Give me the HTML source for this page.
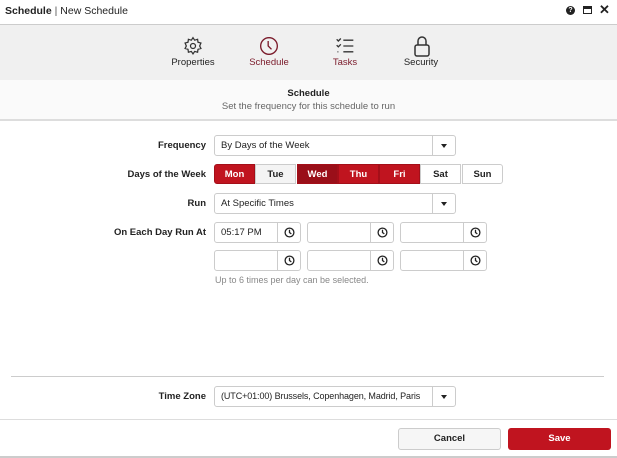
<!DOCTYPE html><html><head><style>
body{margin:0;width:617px;height:458px;overflow:hidden;background:#fff;font-family:"Liberation Sans",sans-serif;font-size:10px;color:#222;position:relative}
.a{position:absolute}
.lbl{position:absolute;font-weight:bold;font-size:9.5px;text-align:right;width:200px;left:6px}
.box{position:absolute;border:1px solid #ccc;border-radius:3px;background:#fff;box-sizing:border-box}
.sel .t{position:absolute;left:6px;top:4px;font-size:9.5px;white-space:nowrap}
.sel .dd{position:absolute;right:0;top:0;bottom:0;width:22px;border-left:1px solid #ccc}
.sel .dd:after{content:"";position:absolute;left:8px;top:8px;border:3.5px solid transparent;border-top:4px solid #222}
.day{position:absolute;top:164px;height:20px;width:41px;box-sizing:border-box;text-align:center;line-height:20px;font-weight:bold;font-size:9.5px}
.on{background:#c0141f;color:#fff;border:1px solid #a40f19}
.off{background:#fff;border:1px solid #ccc;color:#222}
.tm .ck{position:absolute;right:0;top:0;bottom:0;width:22px;border-left:1px solid #ccc}
.tm svg{position:absolute;left:6px;top:4px}
.nav{position:absolute;top:36px;text-align:center;width:60px;font-size:9.5px}
</style></head><body>
<div class="a" style="left:5px;top:5px;font-size:10.5px;font-weight:bold">Schedule <span style="font-weight:normal;color:#555">|</span> <span style="font-weight:normal">New Schedule</span></div>
<div class="a" style="left:566px;top:6px;width:9px;height:9px;border-radius:50%;background:#222;color:#fff;font-size:7px;text-align:center;line-height:9px;font-weight:bold">?</div>
<div class="a" style="left:583px;top:6px;width:9px;height:8px;border:1px solid #222;border-top-width:3px;box-sizing:border-box"></div>
<div class="a" style="left:599px;top:2px;font-size:13px;font-weight:bold">✕</div>
<div class="a" style="left:0;top:24px;width:617px;height:55px;background:#f0f0f0;border-top:1px solid #ccc;border-bottom:1px solid #ccc"></div>
<svg class="a" style="left:183px;top:36px" width="20" height="20" viewBox="0 0 24 24" fill="none" stroke="#333" stroke-width="1.5"><circle cx="12" cy="12" r="3"/><path d="M12 2l2 3 3.5-1 .5 3.5 3.5 1-1.5 3.5 1.5 3-3.5 1-.5 3.5-3.5-1-2 3-2-3-3.5 1-.5-3.5-3.5-1 1.5-3-1.5-3.5 3.5-1 .5-3.5 3.5 1z"/></svg>
<svg class="a" style="left:259px;top:36px" width="20" height="20" viewBox="0 0 24 24" fill="none" stroke="#7a1a2a" stroke-width="1.6"><circle cx="12" cy="12" r="10"/><path d="M11 6v6l4 4"/></svg>
<svg class="a" style="left:335px;top:36px" width="20" height="20" viewBox="0 0 24 24" fill="none" stroke="#333" stroke-width="1.6"><path d="M2 4l2 2 3-3M2 11l2 2 3-3M3 19h1M10 5h12M10 12h12M10 19h12"/></svg>
<svg class="a" style="left:412px;top:35px" width="20" height="22" viewBox="0 0 20 22" fill="none" stroke="#333" stroke-width="1.5"><rect x="3" y="10" width="14" height="11" rx="2"/><path d="M6 10V6a4 4 0 0 1 8 0v4"/></svg>
<div class="nav" style="left:163px;top:57px">Properties</div>
<div class="nav" style="left:239px;top:57px;color:#7a1a2a">Schedule</div>
<div class="nav" style="left:315px;top:57px;color:#7a1a2a">Tasks</div>
<div class="nav" style="left:391px;top:57px">Security</div>
<div class="a" style="left:0;top:80px;width:617px;height:39px;background:#fafafa;border-bottom:2px solid #ddd"></div>
<div class="a" style="left:0;width:617px;top:88px;text-align:center;font-weight:bold;font-size:9.5px">Schedule</div>
<div class="a" style="left:0;width:617px;top:101px;text-align:center;font-size:9.5px;color:#666">Set the frequency for this schedule to run</div>
<div class="lbl" style="top:140px">Frequency</div>
<div class="box sel" style="left:214px;top:135px;width:242px;height:21px"><span class="t">By Days of the Week</span><span class="dd"></span></div>
<div class="lbl" style="top:169px">Days of the Week</div>
<div class="day on" style="left:214px;border-radius:3px 0 0 3px">Mon</div>
<div class="day off" style="left:255px;background:#f4f4f4">Tue</div>
<div class="day on" style="left:297px;background:#9a0f19">Wed</div>
<div class="day on" style="left:338px">Thu</div>
<div class="day on" style="left:379px">Fri</div>
<div class="day off" style="left:420px">Sat</div>
<div class="day off" style="left:462px;border-radius:0 3px 3px 0">Sun</div>
<div class="lbl" style="top:198px">Run</div>
<div class="box sel" style="left:214px;top:193px;width:242px;height:21px"><span class="t">At Specific Times</span><span class="dd"></span></div>
<div class="lbl" style="top:227px">On Each Day Run At</div>
<div class="box tm" style="left:214px;top:222px;width:87px;height:21px"><span class="a" style="left:6px;top:4px;font-size:9.5px">05:17 PM</span><span class="ck"><svg width="11" height="11" viewBox="0 0 12 12" fill="none" stroke="#222" stroke-width="1.4"><circle cx="6" cy="6" r="4.8"/><path d="M6 3v3l2 1.5"/></svg></span></div>
<div class="box tm" style="left:307px;top:222px;width:87px;height:21px"><span class="ck"><svg width="11" height="11" viewBox="0 0 12 12" fill="none" stroke="#222" stroke-width="1.4"><circle cx="6" cy="6" r="4.8"/><path d="M6 3v3l2 1.5"/></svg></span></div>
<div class="box tm" style="left:400px;top:222px;width:87px;height:21px"><span class="ck"><svg width="11" height="11" viewBox="0 0 12 12" fill="none" stroke="#222" stroke-width="1.4"><circle cx="6" cy="6" r="4.8"/><path d="M6 3v3l2 1.5"/></svg></span></div>
<div class="box tm" style="left:214px;top:250px;width:87px;height:21px"><span class="ck"><svg width="11" height="11" viewBox="0 0 12 12" fill="none" stroke="#222" stroke-width="1.4"><circle cx="6" cy="6" r="4.8"/><path d="M6 3v3l2 1.5"/></svg></span></div>
<div class="box tm" style="left:307px;top:250px;width:87px;height:21px"><span class="ck"><svg width="11" height="11" viewBox="0 0 12 12" fill="none" stroke="#222" stroke-width="1.4"><circle cx="6" cy="6" r="4.8"/><path d="M6 3v3l2 1.5"/></svg></span></div>
<div class="box tm" style="left:400px;top:250px;width:87px;height:21px"><span class="ck"><svg width="11" height="11" viewBox="0 0 12 12" fill="none" stroke="#222" stroke-width="1.4"><circle cx="6" cy="6" r="4.8"/><path d="M6 3v3l2 1.5"/></svg></span></div>
<div class="a" style="left:215px;top:275px;font-size:9px;color:#888">Up to 6 times per day can be selected.</div>
<div class="a" style="left:11px;top:376px;width:593px;height:1px;background:#ccc"></div>
<div class="lbl" style="top:391px">Time Zone</div>
<div class="box sel" style="left:214px;top:386px;width:242px;height:21px"><span class="t" style="font-size:9px;letter-spacing:-0.1px">(UTC+01:00) Brussels, Copenhagen, Madrid, Paris</span><span class="dd"></span></div>
<div class="a" style="left:0;top:419px;width:617px;height:1px;background:#ddd"></div>
<div class="box" style="left:398px;top:428px;width:103px;height:22px;text-align:center;line-height:20px;font-weight:bold;font-size:9.5px;background:#f6f6f6">Cancel</div>
<div class="a" style="left:508px;top:428px;width:103px;height:22px;text-align:center;line-height:22px;font-weight:bold;font-size:9.5px;background:#c0141f;color:#fff;border-radius:3px">Save</div>
<div class="a" style="left:0;top:456px;width:617px;height:2px;background:#ccc"></div>
</body></html>
